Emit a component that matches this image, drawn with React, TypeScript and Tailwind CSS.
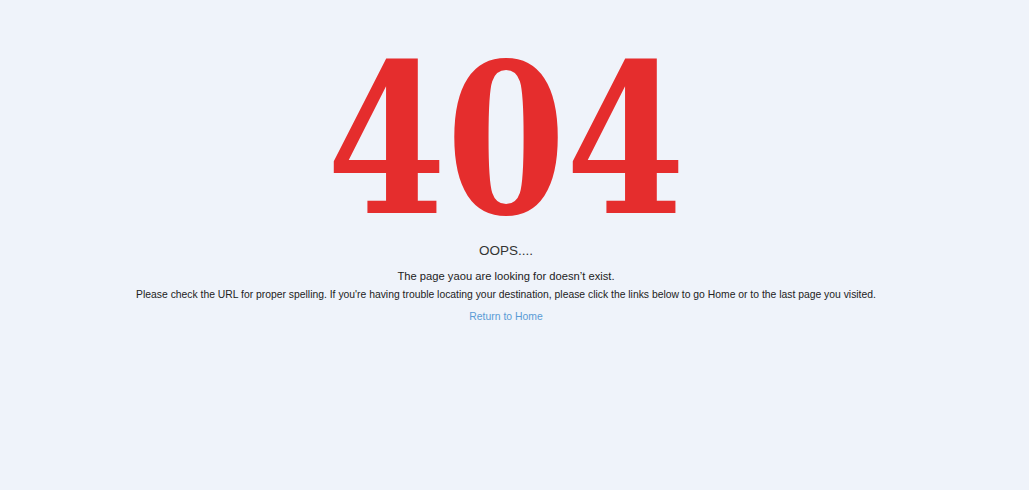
export default function App() {
  return (
    <div className="min-h-[490px] w-full bg-[#eff3fa]">
      <div className="w-[1012px] pt-[41px] text-center [font-family:Liberation_Sans,Arial,sans-serif]">
        <div className="flex justify-center">
          <div
            style={{ fontFamily: "'DejaVu Serif', serif" }}
            className="origin-center scale-x-[0.83] text-[207px] font-bold leading-[200px] text-[#e52d2d]"
          >
            404
          </div>
        </div>
        <div className="mt-[1px] text-[13.5px] leading-[18px] text-[#333]">OOPS....</div>
        <div className="mt-[9px] text-[11.2px] leading-[14px] text-[#222]">The page yaou are looking for doesn’t exist.</div>
        <div className="mt-[6px] text-[10.36px] leading-[12px] text-[#222]">
          Please check the URL for proper spelling. If you're having trouble locating your destination, please click the links below to go Home or to the last page you visited.
        </div>
        <div className="mt-[10px] text-[10.4px] leading-[12px]">
          <a href="#" className="text-[#5a9bd5]">Return to Home</a>
        </div>
      </div>
    </div>
  );
}
